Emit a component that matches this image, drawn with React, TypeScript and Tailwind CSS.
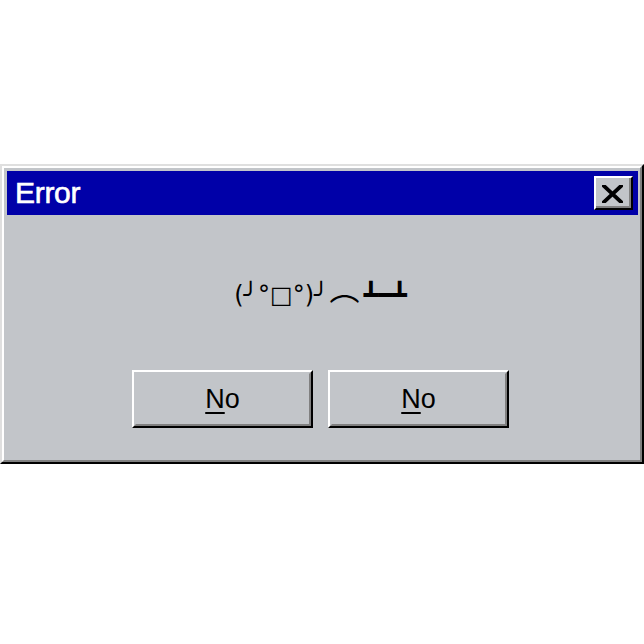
import React from 'react';

const face = 'bg-[#c2c5c9]';

function BevelButton({ label, className }: { label: string; className?: string }) {
  return (
    <button
      className={`border-2 border-t-white border-l-white border-b-black border-r-black ${face} ${className ?? ''}`}
    >
      <div className="flex h-full w-full items-center justify-center border-2 border-t-[#c2c5c9] border-l-[#c2c5c9] border-b-[#808080] border-r-[#808080]">
        <span className="text-[27px] leading-none text-black">
          <span className="underline decoration-2 underline-offset-[4px]">{label[0]}</span>
          {label.slice(1)}
        </span>
      </div>
    </button>
  );
}

export default function App() {
  return (
    <div className="min-h-[644px] w-[644px] bg-white pt-[164px] font-['Liberation_Sans',Arial,sans-serif]">
      {/* dialog window */}
      <div className="border-2 border-t-[#dfdfdf] border-l-[#dfdfdf] border-b-black border-r-black">
        <div className={`border-2 border-t-white border-l-white border-b-[#808080] border-r-[#808080] ${face} pt-[3px] pl-[3px] pr-[2px]`}>
          {/* title bar */}
          <div className="flex h-[44px] items-center justify-between bg-[#0000a8] pl-[8px] pr-[5px]">
            <span className="text-[30px] leading-none tracking-[-0.3px] text-white [-webkit-text-stroke:0.6px_white]">Error</span>
            <button className={`h-[34px] w-[39px] border-2 border-t-white border-l-white border-b-black border-r-[#000] ${face}`}>
              <div className="flex h-full w-full items-center justify-center border-b-2 border-r-2 border-b-[#808080] border-r-[#808080] pt-[3px]">
                <svg width="21" height="18" viewBox="0 0 21 18">
                  <path d="M2 1 L19 17 M19 1 L2 17" stroke="black" strokeWidth="3.8" strokeLinecap="square" />
                </svg>
              </div>
            </button>
          </div>

          {/* body */}
          <div className="flex h-[245px] flex-col items-center pt-[66px] pr-[4px]">
            <p className="flex items-center text-[24px] leading-[28px] text-black font-['DejaVu_Sans',sans-serif]">
              <span>(╯°□°)╯</span>
              <span className="ml-[1px] -translate-y-[8px] text-[30px] font-['Noto_Sans_CJK_JP',sans-serif]">︵</span>
              <span className="ml-[4px]">┻━┻</span>
            </p>
            <div className="mt-[61px] flex gap-[15px]">
              <BevelButton label="No" className="h-[58px] w-[181px]" />
              <BevelButton label="No" className="h-[58px] w-[181px]" />
            </div>
          </div>
        </div>
      </div>
    </div>
  );
}
